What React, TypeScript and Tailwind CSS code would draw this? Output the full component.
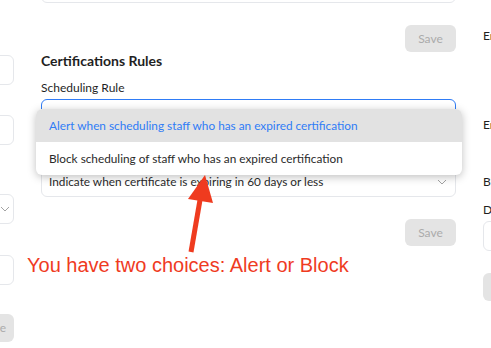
const ui = { fontFamily: 'Lato, Inter, "Noto Sans", sans-serif' }

const Box = ({ className = '' }: { className?: string }) => (
  <div className={`h-[30px] rounded-md border border-gray-200 bg-white ${className}`} />
)

const SaveButton = ({ className = '' }: { className?: string }) => (
  <button className={`h-[27px] w-[51px] rounded-md bg-[#e4e4e4] text-[12px] text-[#ababab] ${className}`}>
    Save
  </button>
)

const Chevron = ({ className = '' }: { className?: string }) => (
  <svg width="10" height="6" viewBox="0 0 10 6" className={className}>
    <path d="M1 1l4 4 4-4" fill="none" stroke="#a3a3a3" strokeWidth="1" />
  </svg>
)

export default function App() {
  return (
    <div className="relative flex h-[348px] w-[491px] overflow-hidden bg-white text-[#1f1f1f]" style={ui}>
      {/* left column, mostly off screen */}
      <div className="w-[14px] shrink-0">
        <div className="ml-[-106px] flex w-[120px] flex-col">
          <Box className="mt-[55px]" />
          <Box className="mt-[30px]" />
          <div className="mt-[49px] flex h-[30px] items-center justify-end rounded-md border border-gray-200 pr-[3px]">
            <Chevron />
          </div>
          <Box className="mt-[31px]" />
          <div className="mt-[29px] flex h-[28px] items-center justify-end rounded-md bg-[#e4e4e4] pr-[8px] text-[12px] text-[#ababab]">
            Save
          </div>
        </div>
      </div>

      {/* main column */}
      <div className="relative ml-[27px] flex w-[415px] shrink-0 flex-col">
        <div className="mt-[-31px] h-[34px] rounded-md border border-gray-200" />
        <SaveButton className="mt-[22px] self-end" />
        <h2 className="text-[14px] font-bold leading-[18px]">Certifications Rules</h2>
        <label className="mt-[10px] text-[12px] leading-[16px]">Scheduling Rule</label>
        <div className="mt-[3px] h-[30px] rounded-md border border-[#2f7cf6]" />
        <div className="mt-[18px] h-[16px]" />
        <div className="mt-[4px] flex h-[30px] items-center justify-between rounded-md border border-gray-200 pl-[7px] pr-[8px]">
          <span className="text-[11.8px] text-[#2a2a2a]">Indicate when certificate is expiring in 60 days or less</span>
          <Chevron />
        </div>
        <SaveButton className="mt-[22px] self-end" />

        {/* open dropdown */}
        <ul className="absolute left-[-5px] top-[109px] w-[426px] overflow-hidden rounded-md bg-white text-[11.8px] shadow-[0_2px_8px_rgba(0,0,0,0.25)]">
          <li className="flex h-[33px] items-center bg-[#e2e2e2] pl-[13px] text-[#2f7cf6]">
            Alert when scheduling staff who has an expired certification
          </li>
          <li className="flex h-[33px] items-center pl-[13px] text-[#2a2a2a]">
            Block scheduling of staff who has an expired certification
          </li>
        </ul>
      </div>

      {/* right column */}
      <div className="ml-[27px] flex w-[200px] shrink-0 flex-col text-[12px] leading-[16px]">
        <span className="mt-[28px]">Enable Notifications</span>
        <span className="mt-[73px]">Enable Reminders</span>
        <span className="mt-[41px]">Block Scheduling</span>
        <span className="mt-[12px]">Days Before</span>
        <Box className="mt-[3px]" />
        <div className="mt-[22px] h-[28px] rounded-md bg-[#e4e4e4]" />
      </div>

      {/* annotation */}
      <svg className="absolute left-0 top-0" width="491" height="348">
        <line x1="191" y1="252" x2="200" y2="200" stroke="#ef3b1f" strokeWidth="5" />
        <polygon points="205,175 188,199 213,203" fill="#ef3b1f" />
      </svg>
      <p
        className="absolute left-[27px] top-[253px] text-[20px] leading-[24px] text-[#ef3b1f]"
        style={{ fontFamily: '"Liberation Sans", Arial, sans-serif' }}
      >
        You have two choices: Alert or Block
      </p>
    </div>
  )
}
